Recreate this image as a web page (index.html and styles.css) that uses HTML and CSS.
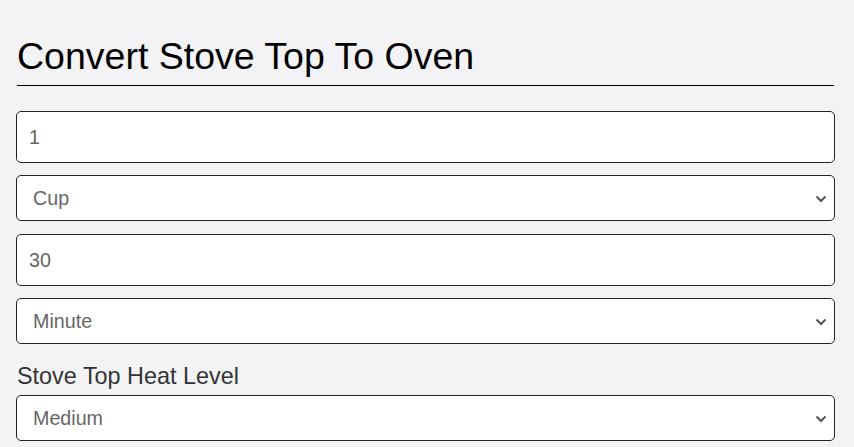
FILE: index.html
```html
<!DOCTYPE html>
<html>
<head>
<meta charset="utf-8">
<link rel="stylesheet" href="styles.css">
</head>
<body>
<div class="page">
  <h1 class="title">Convert Stove Top To Oven</h1>
  <div class="form">
    <input class="field" type="text" value="1">
    <div class="select-wrap">
      <select class="field select"><option>Cup</option></select>
      <svg class="chev" width="12" height="8" viewBox="0 0 12 8"><path d="M1.5 1.5 L6 6 L10.5 1.5" fill="none" stroke="#555" stroke-width="2"/></svg>
    </div>
    <input class="field" type="text" value="30">
    <div class="select-wrap">
      <select class="field select"><option>Minute</option></select>
      <svg class="chev" width="12" height="8" viewBox="0 0 12 8"><path d="M1.5 1.5 L6 6 L10.5 1.5" fill="none" stroke="#555" stroke-width="2"/></svg>
    </div>
    <label class="label">Stove Top Heat Level</label>
    <div class="select-wrap">
      <select class="field select"><option>Medium</option></select>
      <svg class="chev" width="12" height="8" viewBox="0 0 12 8"><path d="M1.5 1.5 L6 6 L10.5 1.5" fill="none" stroke="#555" stroke-width="2"/></svg>
    </div>
  </div>
</div>
</body>
</html>
```
FILE: styles.css
```css
html, body {
  margin: 0;
  padding: 0;
  background: #f3f3f5;
  font-family: "Liberation Sans", Arial, sans-serif;
}
.page {
  width: 819px;
  padding: 0 0 0 16px;
}
.title {
  margin: 0;
  padding-top: 34px;
  font-size: 37.5px;
  font-weight: normal;
  color: #000;
  line-height: 44px;
  padding-bottom: 7px;
  border-bottom: 1px solid #000;
  margin-left: 1px;
  margin-right: 1px;
}
.form {
  display: flex;
  flex-direction: column;
  padding-top: 25px;
}
.field {
  box-sizing: border-box;
  width: 819px;
  margin: 0;
  border: 1px solid #222;
  border-radius: 5px;
  background: #fff;
  font-family: "Liberation Sans", Arial, sans-serif;
  font-size: 19.7px;
  color: #666;
  outline: none;
}
input.field {
  height: 52px;
  padding: 0 12px;
  margin-bottom: 12px;
}
.select-wrap {
  position: relative;
  margin-bottom: 13px;
}
.select {
  display: block;
  height: 46px;
  padding: 0 16px;
  appearance: none;
  -webkit-appearance: none;
}
.chev {
  position: absolute;
  right: 8px;
  top: 20px;
  pointer-events: none;
}
.label {
  font-size: 23.4px;
  color: #333;
  line-height: 28px;
  margin: 5px 0 5px 1px;
}
```
